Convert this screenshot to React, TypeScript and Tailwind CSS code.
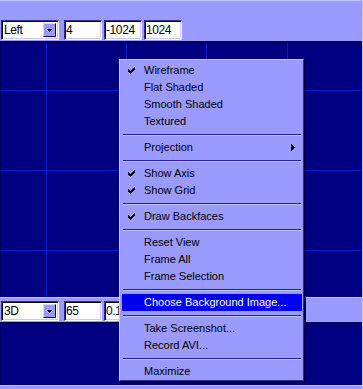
import React from 'react';

type Item =
  | { kind: 'item'; label: string; checked?: boolean; sub?: boolean; active?: boolean }
  | { kind: 'sep' };

const menu: Item[] = [
  { kind: 'item', label: 'Wireframe', checked: true },
  { kind: 'item', label: 'Flat Shaded' },
  { kind: 'item', label: 'Smooth Shaded' },
  { kind: 'item', label: 'Textured' },
  { kind: 'sep' },
  { kind: 'item', label: 'Projection', sub: true },
  { kind: 'sep' },
  { kind: 'item', label: 'Show Axis', checked: true },
  { kind: 'item', label: 'Show Grid', checked: true },
  { kind: 'sep' },
  { kind: 'item', label: 'Draw Backfaces', checked: true },
  { kind: 'sep' },
  { kind: 'item', label: 'Reset View' },
  { kind: 'item', label: 'Frame All' },
  { kind: 'item', label: 'Frame Selection' },
  { kind: 'sep' },
  { kind: 'item', label: 'Choose Background Image...', active: true },
  { kind: 'sep' },
  { kind: 'item', label: 'Take Screenshot...' },
  { kind: 'item', label: 'Record AVI...' },
  { kind: 'sep' },
  { kind: 'item', label: 'Maximize' },
];

const sunken =
  'h-[20px] bg-white text-[12px] tracking-[-0.4px] border border-t-[#30308a] border-l-[#30308a] border-b-white border-r-white shadow-[inset_1px_1px_0_#000000,inset_-1px_-1px_0_#c8c8f0]';

function Check() {
  return (
    <svg width="7" height="7" viewBox="0 0 7 7" className="block" shapeRendering="crispEdges">
      <path
        d="M6 0h1v3h-1zM5 1h1v3h-1zM4 2h1v3h-1zM3 3h1v3h-1zM2 4h1v3h-1zM1 3h1v3h-1zM0 2h1v3h-1z"
        fill="#000"
      />
    </svg>
  );
}

function Combo({ value }: { value: string }) {
  return (
    <div className={`${sunken} w-[58px] flex items-center relative`}>
      <span className="pl-[2px] leading-none">{value}</span>
      <div className="absolute right-[2px] top-[2px] w-[13px] h-[14px] bg-[#9a9aff] border border-t-[#d8d8ff] border-l-[#d8d8ff] border-b-[#000040] border-r-[#000040] flex items-center justify-center">
        <svg width="5" height="3" viewBox="0 0 5 3" className="block mt-[1px]" shapeRendering="crispEdges">
          <path d="M0 0h5v1h-5zM1 1h3v1h-3zM2 2h1v1h-1z" fill="#000" />
        </svg>
      </div>
    </div>
  );
}

function Field({ value }: { value: string }) {
  return (
    <div className={`${sunken} w-[38px] flex items-center`}>
      <span className="pl-[1px] leading-none">{value}</span>
    </div>
  );
}

function Toolbar({ mode, a, b, c }: { mode: string; a: string; b: string; c: string }) {
  return (
    <div className="flex gap-[2px] pl-[1px]">
      <Combo value={mode} />
      <div className="w-[1px]" />
      <Field value={a} />
      <Field value={b} />
      <Field value={c} />
    </div>
  );
}

export default function App() {
  return (
    <div
      className="relative w-[363px] h-[389px] overflow-hidden bg-[#9a9aff] text-[11px] text-black border-t border-t-[#c4c4ff] border-r border-r-[#c4c4ff]"
      style={{ fontFamily: '"Liberation Sans", Arial, sans-serif' }}
    >
      <div className="pt-[19px]">
        <Toolbar mode="Left" a="4" b="-1024" c="1024" />
      </div>

      <div className="relative mt-[1px] h-[256px] bg-[#000080] border-t-2 border-t-[#000060] border-l border-l-[#000060]">
        <svg width="362" height="254" className="absolute inset-0 block" shapeRendering="crispEdges">
          {[45, 125, 205, 286].map(x => (
            <rect key={x} x={x} y={0} width={1} height={254} fill="#0018d8" />
          ))}
          {[47, 127, 207].map(y => (
            <rect key={y} x={0} y={y} width={362} height={1} fill="#0018d8" />
          ))}
        </svg>
      </div>

      <div className="h-[25px] pt-[3px] border-t border-t-[#c4c4ff]">
        <Toolbar mode="3D" a="65" b="0.1" c="" />
      </div>

      <div className="h-[63px] bg-[#000080] border-t-2 border-t-[#000060] border-l border-l-[#000060]" />
      <div className="h-px bg-[#c4c4ff]" />

      <div className="absolute left-[119px] top-[58px] w-[185px] h-[322px] bg-[#9a9aff] border border-t-[#c8c8ff] border-l-[#c8c8ff] border-b-[#2a2a9a] border-r-[#2a2a9a] shadow-[2px_2px_0_#00004c] py-[2px]">
        {menu.map((m, i) =>
          m.kind === 'sep' ? (
            <div key={i} className="h-[9px] pt-[4px] pl-[3px] pr-[2px]">
              <div className="h-px bg-[#2020a8]" />
              <div className="h-px bg-[#c0c0ff]" />
            </div>
          ) : (
            <div
              key={i}
              className={`relative h-[17px] ml-[2px] mr-[1px] flex items-center ${m.active ? 'bg-[#0000f0] text-white' : ''}`}
            >
              {m.checked && (
                <div className="absolute left-[6px] top-[5px]">
                  <Check />
                </div>
              )}
              <span className="pl-[22px] leading-[17px] whitespace-nowrap">{m.label}</span>
              {m.sub && (
                <svg width="4" height="7" viewBox="0 0 4 7" className="absolute right-[7px] top-[5px] block" shapeRendering="crispEdges">
                  <path d="M0 0h1v7h-1zM1 1h1v5h-1zM2 2h1v3h-1zM3 3h1v1h-1z" fill="#000" />
                </svg>
              )}
            </div>
          )
        )}
      </div>
    </div>
  );
}
